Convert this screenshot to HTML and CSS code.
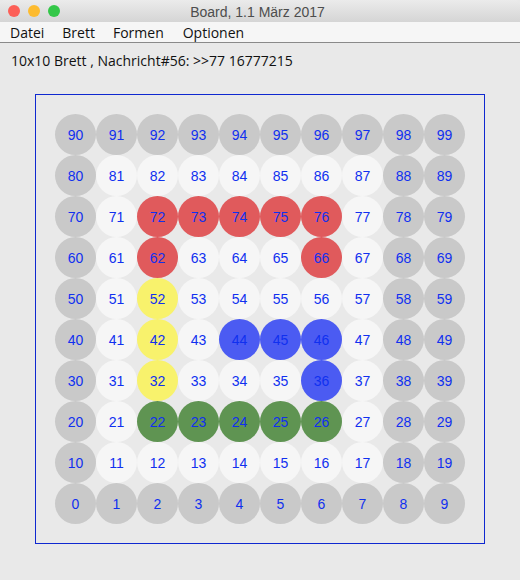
FILE: index.html
```html
<!DOCTYPE html>
<html>
<head>
<meta charset="utf-8">
<link rel="stylesheet" href="styles.css">
</head>
<body>
<div class="window">
  <div class="titlebar">
    <div class="lights">
      <span class="light red"></span>
      <span class="light yellow"></span>
      <span class="light green"></span>
    </div>
    <div class="title">Board, 1.1 März 2017</div>
  </div>
  <div class="menubar">
    <span class="menu m1">Datei</span>
    <span class="menu m2">Brett</span>
    <span class="menu m3">Formen</span>
    <span class="menu m4">Optionen</span>
  </div>
  <div class="status">10x10 Brett , Nachricht#56: &gt;&gt;77 16777215</div>
  <div class="board">
    <div class="grid" id="grid"></div>
  </div>
</div>
<script>
  var red = [72,73,74,75,76,62,66];
  var yellow = [52,42,32];
  var blue = [44,45,46,36];
  var green = [22,23,24,25,26];
  var grid = document.getElementById('grid');
  for (var r = 9; r >= 0; r--) {
    for (var c = 0; c < 10; c++) {
      var n = r * 10 + c;
      var d = document.createElement('div');
      var cls = 'cell ';
      if (red.indexOf(n) >= 0) cls += 'red';
      else if (yellow.indexOf(n) >= 0) cls += 'yellow';
      else if (blue.indexOf(n) >= 0) cls += 'blue';
      else if (green.indexOf(n) >= 0) cls += 'green';
      else if (r === 0 || r === 9 || c === 0 || c === 9 || c === 8) cls += 'gray';
      else cls += 'white';
      d.className = cls;
      d.textContent = n;
      grid.appendChild(d);
    }
  }
</script>
</body>
</html>
```
FILE: styles.css
```css
html, body {
  margin: 0;
  padding: 0;
  background: #e9e9e9;
}
.window {
  width: 520px;
  height: 580px;
  background: #e9e9e9;
  font-family: "Liberation Sans", Arial, sans-serif;
}
.titlebar {
  height: 22px;
  background: linear-gradient(#ebebeb, #d5d5d5);
  position: relative;
  display: flex;
  align-items: center;
  justify-content: center;
  border-radius: 5px 5px 0 0;
}
.lights {
  position: absolute;
  left: 8px;
  top: 5px;
  display: flex;
  gap: 8px;
}
.light {
  width: 12px;
  height: 12px;
  border-radius: 50%;
  display: block;
}
.light.red { background: #fc5f57; }
.light.yellow { background: #fdbb2f; }
.light.green { background: #33c748; }
.title {
  font-size: 14px;
  color: #4d4d4d;
  margin-left: -5px;
  margin-top: 1px;
}
.menubar {
  height: 20px;
  background: #f6f6f6;
  border-bottom: 1px solid #8a8a8a;
  display: flex;
  align-items: center;
  font-family: "Open Sans", "Liberation Sans", sans-serif;
  font-size: 14px;
  color: #111;
}
.menu { display: block; }
.m1 { margin-left: 10px; }
.m2 { margin-left: 18px; }
.m3 { margin-left: 18px; }
.m4 { margin-left: 19px; }
.status {
  font-family: "Open Sans", "Liberation Sans", sans-serif;
  font-size: 14px;
  color: #111;
  padding: 9px 0 0 11px;
  height: 27px;
  line-height: 18px;
}
.board {
  margin: 15px 0 0 35px;
  width: 448px;
  height: 448px;
  border: 1px solid #0f28d0;
  display: flex;
  align-items: center;
  justify-content: center;
}
.grid {
  display: grid;
  grid-template-columns: repeat(10, 41px);
  grid-template-rows: repeat(10, 41px);
}
.cell {
  width: 41px;
  height: 41px;
  border-radius: 50%;
  display: flex;
  align-items: center;
  justify-content: center;
  font-family: "Liberation Sans", Arial, sans-serif;
  font-size: 14px;
  color: #1030f0;
}
.gray { background: #c9c9c9; }
.white { background: #f6f6f6; }
.red { background: #e05a5c; }
.yellow { background: #f8f26c; }
.blue { background: #4b5bf2; }
.green { background: #5f9452; }
```
